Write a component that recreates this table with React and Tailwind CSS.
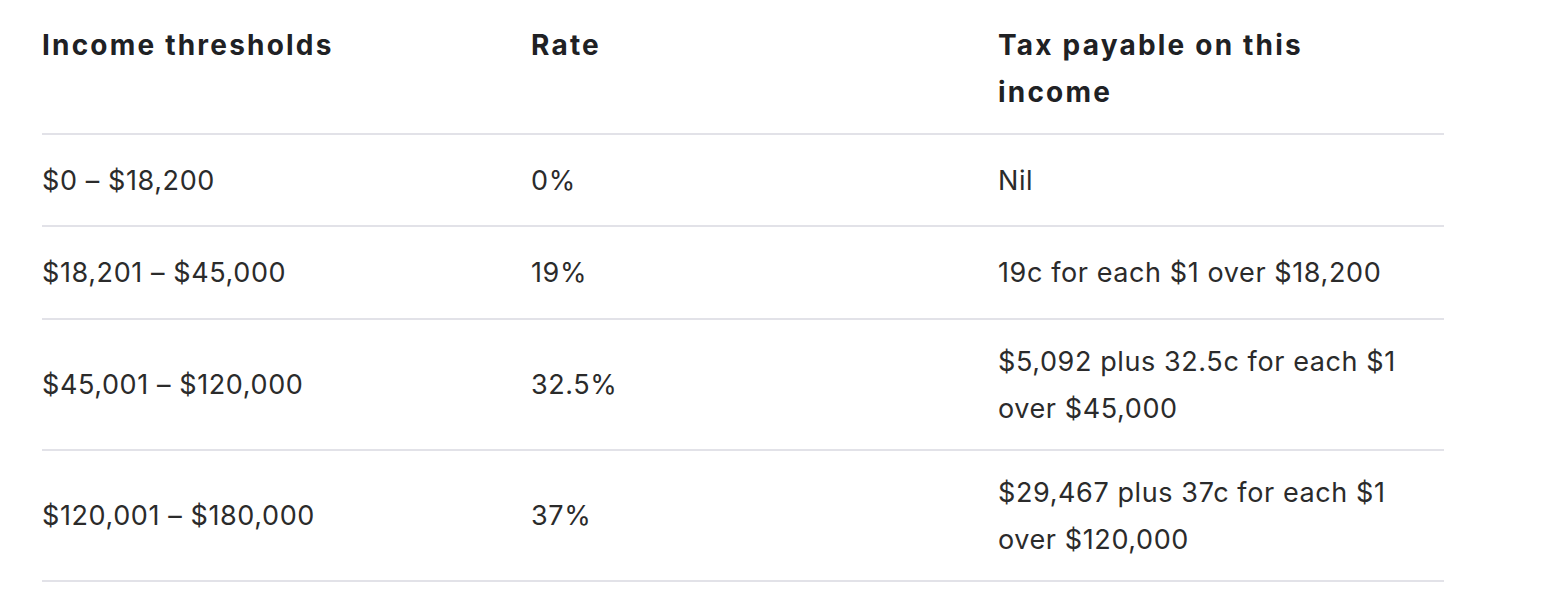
const rows = [
  { range: '$0 – $18,200', rate: '0%', tax: ['Nil'], h: 'h-[92px]' },
  { range: '$18,201 – $45,000', rate: '19%', tax: ['19c for each $1 over $18,200'], h: 'h-[93px]' },
  { range: '$45,001 – $120,000', rate: '32.5%', tax: ['$5,092 plus 32.5c for each $1', 'over $45,000'], h: 'h-[131px]' },
  { range: '$120,001 – $180,000', rate: '37%', tax: ['$29,467 plus 37c for each $1', 'over $120,000'], h: 'h-[131px]' },
];

export default function App() {
  return (
    <div className="min-h-[600px] bg-white pl-[42px] font-['Inter','Liberation_Sans',sans-serif]">
      <table className="w-[1402px] table-fixed border-collapse text-left">
        <colgroup>
          <col className="w-[489px]" />
          <col className="w-[467px]" />
          <col className="w-[446px]" />
        </colgroup>
        <thead>
          <tr className="h-[134px] border-b-2 border-[#e2e2e8]">
            <th className="pt-[22px] pr-8 align-top text-[28px] leading-[47px] font-bold tracking-[2.2px] text-[#202124]">
              Income thresholds
            </th>
            <th className="pt-[22px] pr-8 align-top text-[28px] leading-[47px] font-bold tracking-[2.2px] text-[#202124]">
              Rate
            </th>
            <th className="pt-[22px] pr-8 align-top text-[28px] leading-[47px] font-bold tracking-[2.2px] text-[#202124]">
              Tax payable on this
              <br />
              income
            </th>
          </tr>
        </thead>
        <tbody>
          {rows.map((r) => (
            <tr key={r.range} className={`${r.h} border-b-2 border-[#e2e2e8]`}>
              <td className="pr-8 align-middle text-[27px] leading-[47px] tracking-[0.6px] text-[#2b2b2b]">{r.range}</td>
              <td className="pr-8 align-middle text-[27px] leading-[47px] tracking-[0.6px] text-[#2b2b2b]">{r.rate}</td>
              <td className="pr-8 align-middle text-[27px] leading-[47px] tracking-[0.6px] text-[#2b2b2b]">
                {r.tax.map((t, i) => (
                  <div key={i}>{t}</div>
                ))}
              </td>
            </tr>
          ))}
        </tbody>
      </table>
    </div>
  );
}
